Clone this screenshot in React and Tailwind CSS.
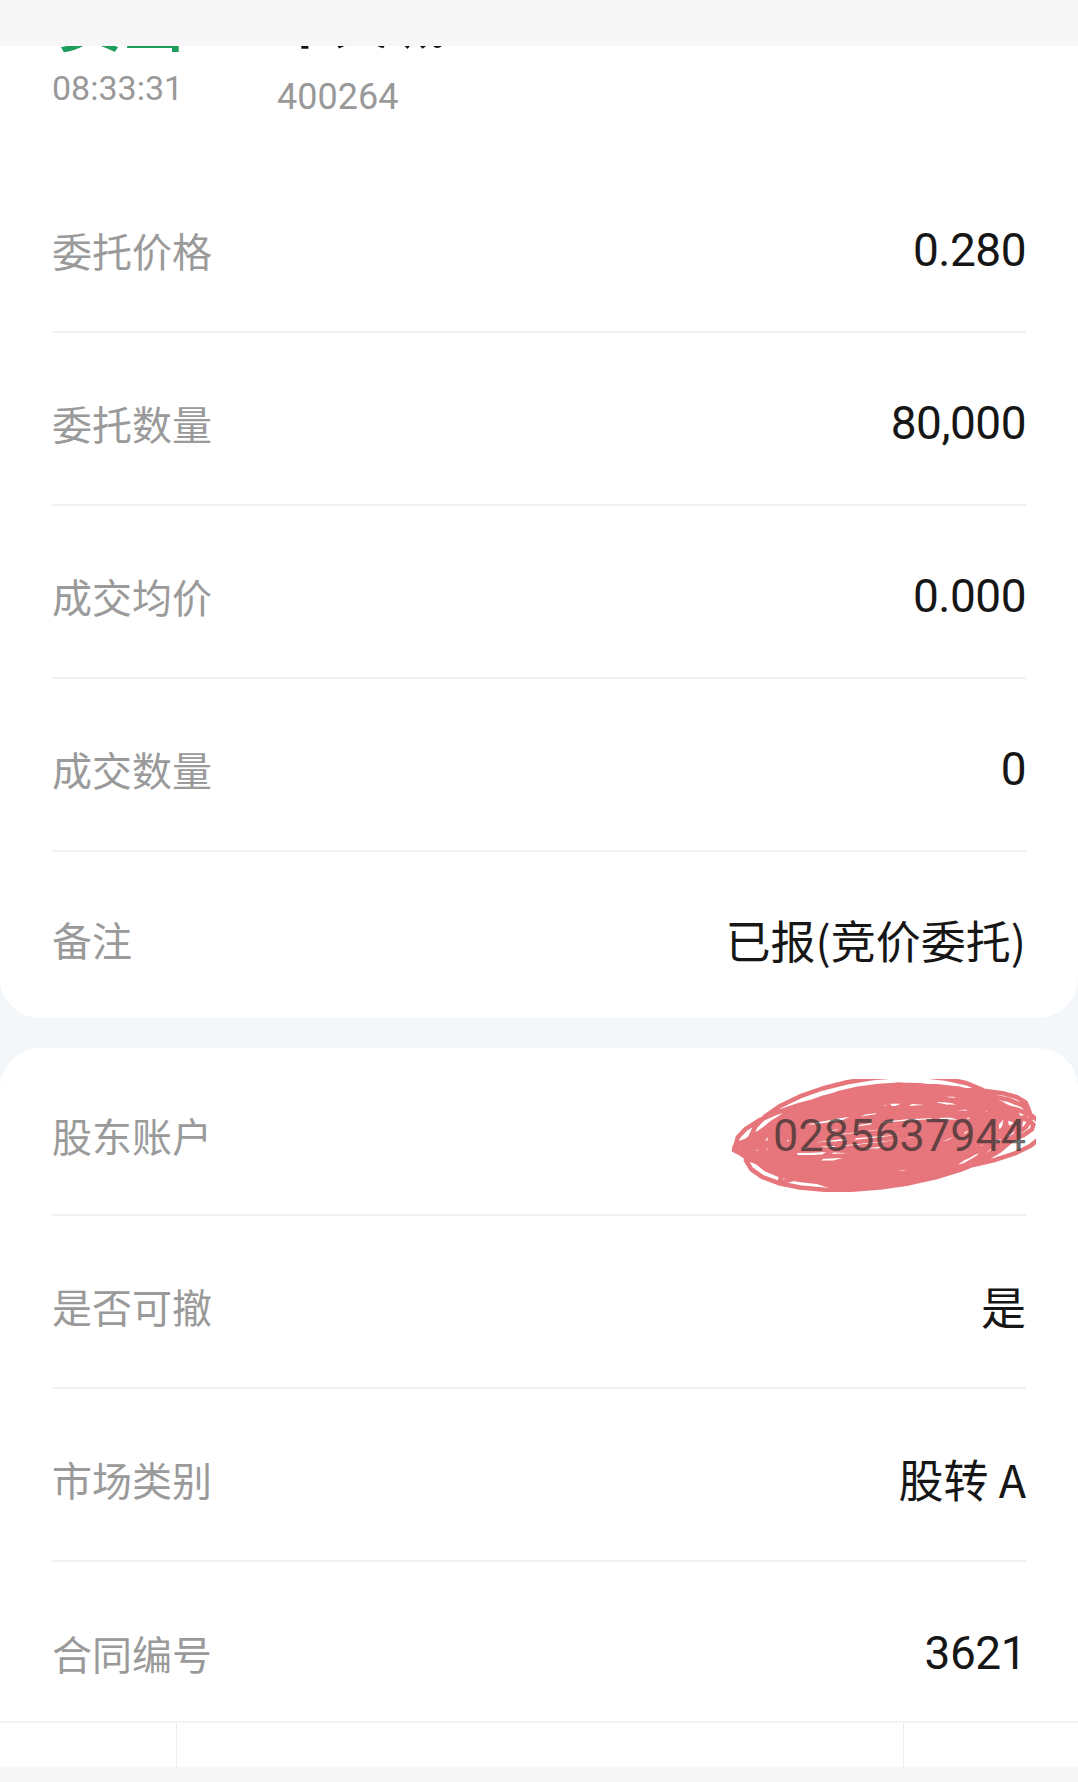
import React from 'react';

const cjk = { fontFamily: '"Noto Sans CJK SC", "Noto Sans", sans-serif' };

const orderRows = [
  { label: '委托价格', value: '0.280', num: true },
  { label: '委托数量', value: '80,000', num: true },
  { label: '成交均价', value: '0.000', num: true },
  { label: '成交数量', value: '0', num: true },
  { label: '备注', value: '已报(竞价委托)' },
];

const accountRows = [
  { label: '股东账户', value: '0285637944', hidden: true },
  { label: '是否可撤', value: '是' },
  { label: '市场类别', value: '股转 A' },
  { label: '合同编号', value: '3621', num: true },
];

// hand-drawn looking loops over the account number
const scribble = (() => {
  let seed = 23;
  const rnd = () => {
    seed = (seed * 16807) % 2147483647;
    return seed / 2147483647;
  };
  const pts = [];
  for (let loop = 0; loop < 26; loop++) {
    const cx = 150 + (rnd() - 0.5) * 40;
    const cy = 56 + (rnd() - 0.5) * 20;
    const rx = 96 + rnd() * 48;
    const ry = 8 + rnd() * 42;
    const rot = -0.13 + (rnd() - 0.5) * 0.16;
    const start = rnd() * Math.PI * 2;
    for (let k = 0; k <= 30; k++) {
      const a = start + (k / 30) * Math.PI * 2;
      const x = rx * Math.cos(a);
      const y = ry * Math.sin(a);
      pts.push(
        (cx + x * Math.cos(rot) - y * Math.sin(rot)).toFixed(1) +
          ' ' +
          (cy + x * Math.sin(rot) + y * Math.cos(rot)).toFixed(1)
      );
    }
  }
  return 'M' + pts.join(' L');
})();

const Value = ({ row }) => {
  if (row.num) {
    return (
      <span
        className="text-[46px] leading-none text-[#161616] tracking-[-0.5px]"
        style={{ fontFamily: 'Roboto, "Liberation Sans", sans-serif' }}
      >
        {row.value}
      </span>
    );
  }
  if (row.hidden) {
    return (
      <span className="relative">
        <svg
          width="304"
          height="116"
          viewBox="-2 -2 304 116"
          className="absolute right-[-10px] top-[-34px]"
        >
          <path
            d={scribble}
            fill="none"
            stroke="#e0585f"
            strokeWidth="4.5"
            strokeLinecap="round"
            strokeLinejoin="round"
            opacity="0.82"
          />
        </svg>
        <span
          className="relative text-[45px] leading-none text-[#2a2a2a]/70"
          style={{ fontFamily: 'Roboto, "Liberation Sans", sans-serif' }}
        >
          {row.value}
        </span>
      </span>
    );
  }
  return (
    <span className="text-[45px] leading-none text-[#161616]" style={cjk}>
      {row.value}
    </span>
  );
};

const Row = ({ row, last, height }) => (
  <div
    className={`flex items-center justify-between pt-[8px] shrink-0 ${
      last ? '' : 'border-b-2 border-[#f1f1f1]'
    } ${height}`}
  >
    <span className="text-[40px] leading-none text-[#9a9a9a]" style={cjk}>
      {row.label}
    </span>
    <Value row={row} />
  </div>
);

export default function App() {
  return (
    <div className="relative h-[1782px] w-[1078px] overflow-hidden bg-[#f4f7fa] flex flex-col">
      {/* order card */}
      <div className="bg-white rounded-b-[40px] px-[52px] h-[1018px] shrink-0 flex flex-col">
        <div className="h-[160px] shrink-0 flex">
          <div className="w-[225px] -mt-[14px] pl-[5px]">
            <div className="h-[64px] text-[64px] leading-[64px] text-[#1f9d5c] font-medium" style={cjk}>
              卖出
            </div>
            <div
              className="mt-[18px] -ml-[5px] text-[34px] leading-[40px] text-[#999]"
              style={{ fontFamily: 'Roboto, sans-serif' }}
            >
              08:33:31
            </div>
          </div>
          <div className="-mt-[12px]">
            <div className="h-[62px] text-[56px] leading-[62px] text-[#111] font-bold" style={cjk}>
              中天城3
            </div>
            <div
              className="mt-[27px] text-[36px] leading-[40px] text-[#999]"
              style={{ fontFamily: 'Roboto, sans-serif' }}
            >
              400264
            </div>
          </div>
        </div>
        {orderRows.map((row, i) => (
          <Row
            key={row.label}
            row={row}
            last={i === orderRows.length - 1}
            height={i === orderRows.length - 1 ? 'h-[166px]' : 'h-[173px]'}
          />
        ))}
      </div>

      {/* account card */}
      <div className="mt-[30px] bg-white rounded-t-[40px] px-[52px] flex-1 min-h-0 overflow-hidden flex flex-col">
        {accountRows.map((row, i) => (
          <Row
            key={row.label}
            row={row}
            last={i === accountRows.length - 1}
            height={i === 0 ? 'h-[168px] pt-[4px]' : 'h-[173px]'}
          />
        ))}
      </div>

      {/* bottom toolbar */}
      <div className="h-[61px] shrink-0 bg-white border-t-2 border-[#f3f3f3] flex">
        <div className="w-[177px] border-r border-[#ececec]" />
        <div className="flex-1 border-r border-[#ececec] flex justify-center pt-[50px]">
          <span className="text-[46px] leading-none text-white" style={cjk}>
            撤单
          </span>
        </div>
        <div className="w-[174px]" />
      </div>

      {/* system bars over content */}
      <div className="absolute top-0 inset-x-0 h-[46px] bg-[#f7f7f7]" />
      <div className="absolute bottom-0 inset-x-0 h-[15px] bg-[#f7f7f7]" />
    </div>
  );
}
